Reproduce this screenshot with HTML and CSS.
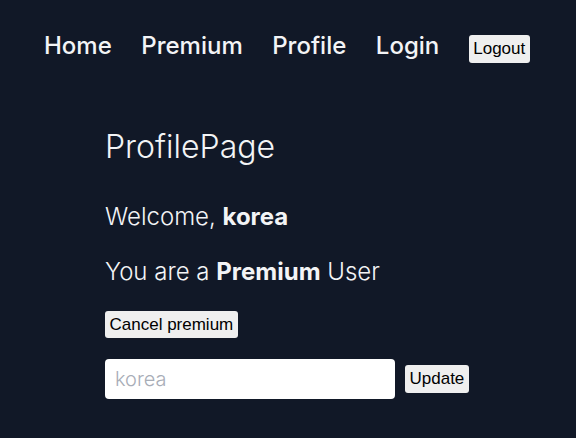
FILE: index.html
```html
<!DOCTYPE html>
<html>
<head>
<meta charset="utf-8">
<link rel="stylesheet" href="styles.css">
</head>
<body>
<nav class="nav">
  <a class="nav-link" href="#">Home</a>
  <a class="nav-link" href="#">Premium</a>
  <a class="nav-link" href="#">Profile</a>
  <a class="nav-link" href="#">Login</a>
  <button class="btn">Logout</button>
</nav>
<main class="main">
  <h1 class="title">ProfilePage</h1>
  <p class="line welcome">Welcome, <b>korea</b></p>
  <p class="line status">You are a <b>Premium</b> User</p>
  <div class="row"><button class="btn">Cancel premium</button></div>
  <div class="form">
    <input class="input" type="text" placeholder="korea">
    <button class="btn">Update</button>
  </div>
</main>
</body>
</html>
```
FILE: styles.css
```css
html, body {
  margin: 0;
  padding: 0;
  background: #111827;
  height: 100%;
}
body {
  font-family: Inter, "Noto Sans", sans-serif;
  color: #f3f4f6;
}
.nav {
  display: flex;
  align-items: baseline;
  gap: 29.5px;
  padding: 31px 44px 0;
}
.nav-link {
  color: #f3f4f6;
  text-decoration: none;
  font-size: 24px;
  font-weight: 500;
  line-height: 29px;
}
.btn {
  font-family: "Liberation Sans", Arial, sans-serif;
  font-size: 17px;
  color: #000;
  background: #efefef;
  border: none;
  border-radius: 3px;
  padding: 4px 4.5px;
  line-height: 19.5px;
}
.main {
  padding: 0 105px;
  margin-top: 64px;
}
.title {
  margin: 0;
  font-size: 32px;
  font-weight: 300;
  line-height: 40px;
}
.line {
  margin: 0;
  font-size: 24px;
  font-weight: 300;
  line-height: 32px;
}
.welcome { margin-top: 34px; }
.status { margin-top: 23px; }
.line b { font-weight: 700; }
.row { margin-top: 23px; display: flex; }
.form {
  display: flex;
  align-items: center;
  gap: 10px;
  margin-top: 21px;
}
.input {
  width: 290px;
  height: 40px;
  box-sizing: border-box;
  border: none;
  border-radius: 4px;
  padding: 0 10px;
  font-family: Inter, sans-serif;
  font-size: 20px;
  font-weight: 300;
  background: #fff;
  outline: none;
}
.input::placeholder { color: #a8adb7; }
```
